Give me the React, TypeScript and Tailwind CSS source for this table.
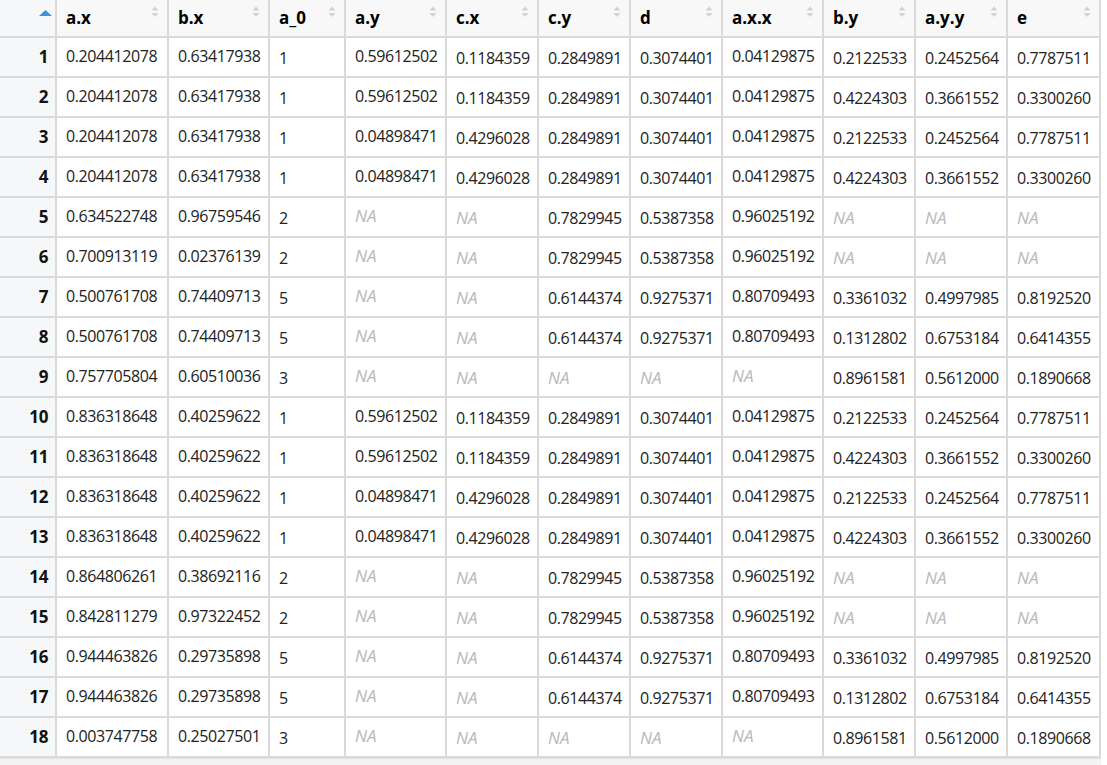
import React from 'react';

const columns = [
  { name: 'a.x', width: 'w-[112px]', high: true },
  { name: 'b.x', width: 'w-[101px]', high: true },
  { name: 'a_0', width: 'w-[76px]', high: false },
  { name: 'a.y', width: 'w-[101px]', high: true },
  { name: 'c.x', width: 'w-[92px]', high: false },
  { name: 'c.y', width: 'w-[92px]', high: false },
  { name: 'd', width: 'w-[92px]', high: false },
  { name: 'a.x.x', width: 'w-[101px]', high: true },
  { name: 'b.y', width: 'w-[92px]', high: false },
  { name: 'a.y.y', width: 'w-[92px]', high: false },
  { name: 'e', width: 'w-[93px]', high: false },
];

const NA = 'NA';

const joinA = ['0.59612502', '0.1184359', '0.2849891', '0.3074401', '0.04129875'];
const joinB = ['0.04898471', '0.4296028', '0.2849891', '0.3074401', '0.04129875'];
const tailA = ['0.2122533', '0.2452564', '0.7787511'];
const tailB = ['0.4224303', '0.3661552', '0.3300260'];
const onlyC = [NA, NA, '0.7829945', '0.5387358', '0.96025192', NA, NA, NA];
const tailC = ['0.3361032', '0.4997985', '0.8192520'];
const tailD = ['0.1312802', '0.6753184', '0.6414355'];
const mid5 = [NA, NA, '0.6144374', '0.9275371', '0.80709493'];
const onlyE = [NA, NA, NA, NA, NA, '0.8961581', '0.5612000', '0.1890668'];

const rows: string[][] = [
  ['0.204412078', '0.63417938', '1', ...joinA, ...tailA],
  ['0.204412078', '0.63417938', '1', ...joinA, ...tailB],
  ['0.204412078', '0.63417938', '1', ...joinB, ...tailA],
  ['0.204412078', '0.63417938', '1', ...joinB, ...tailB],
  ['0.634522748', '0.96759546', '2', ...onlyC],
  ['0.700913119', '0.02376139', '2', ...onlyC],
  ['0.500761708', '0.74409713', '5', ...mid5, ...tailC],
  ['0.500761708', '0.74409713', '5', ...mid5, ...tailD],
  ['0.757705804', '0.60510036', '3', ...onlyE],
  ['0.836318648', '0.40259622', '1', ...joinA, ...tailA],
  ['0.836318648', '0.40259622', '1', ...joinA, ...tailB],
  ['0.836318648', '0.40259622', '1', ...joinB, ...tailA],
  ['0.836318648', '0.40259622', '1', ...joinB, ...tailB],
  ['0.864806261', '0.38692116', '2', ...onlyC],
  ['0.842811279', '0.97322452', '2', ...onlyC],
  ['0.944463826', '0.29735898', '5', ...mid5, ...tailC],
  ['0.944463826', '0.29735898', '5', ...mid5, ...tailD],
  ['0.003747758', '0.25027501', '3', ...onlyE],
];

const SortIcon: React.FC = () => (
  <svg width="8" height="12" viewBox="0 0 8 12" className="absolute right-[8px] top-[6px]">
    <path d="M0.5 4.5 L4 0.5 L7.5 4.5 Z" fill="#d3d3d3" />
    <path d="M0.5 7 L4 11 L7.5 7 Z" fill="#d3d3d3" />
  </svg>
);

const App: React.FC = () => {
  return (
    <div className="w-[1107px] h-[765px] bg-white overflow-hidden font-['Open_Sans','Noto_Sans',sans-serif] text-[16px] tracking-[-0.4px] text-[#222]">
      <div className="flex flex-col w-[1101px]">
        {/* header */}
        <div className="flex h-[38px] bg-[#f8f8f9] border-b-2 border-[#dadada]">
          <div className="relative w-[57px] shrink-0 border-r-2 border-[#dadada] bg-[#f5f7f9]">
            <svg width="13" height="6" viewBox="0 0 13 6" className="absolute left-[39px] top-[10px]">
              <path d="M0 6 L6.5 0 L13 6 Z" fill="#3d8fdf" />
            </svg>
          </div>
          {columns.map((c) => (
            <div
              key={c.name}
              className={`relative ${c.width} shrink-0 border-r-2 border-[#dadada] flex items-center pl-[9px] font-bold text-[17px] tracking-normal text-black`}
            >
              {c.name}
              <SortIcon />
            </div>
          ))}
        </div>
        {/* body */}
        {rows.map((r, i) => (
          <div key={i} className="flex h-[40px] border-b-2 border-[#dadada]">
            <div className="w-[57px] shrink-0 border-r-2 border-[#dadada] bg-[#f5f7f9] flex items-center justify-end pr-[7px] font-bold text-[17px] text-[#111]">
              {i + 1}
            </div>
            {r.map((v, j) => (
              <div
                key={j}
                className={`${columns[j].width} shrink-0 border-r-2 border-[#dadada] flex items-center pl-[9px] ${
                  columns[j].high ? 'pb-[3px]' : 'pt-[1px]'
                } ${v === NA ? 'italic text-[17px] tracking-normal text-[#b8b8b8]' : ''}`}
              >
                {v}
              </div>
            ))}
          </div>
        ))}
      </div>
      <div className="h-[7px] w-[1101px] border-t border-[#e2e2e2] bg-[#f1f3f5]" />
    </div>
  );
};

export default App;
